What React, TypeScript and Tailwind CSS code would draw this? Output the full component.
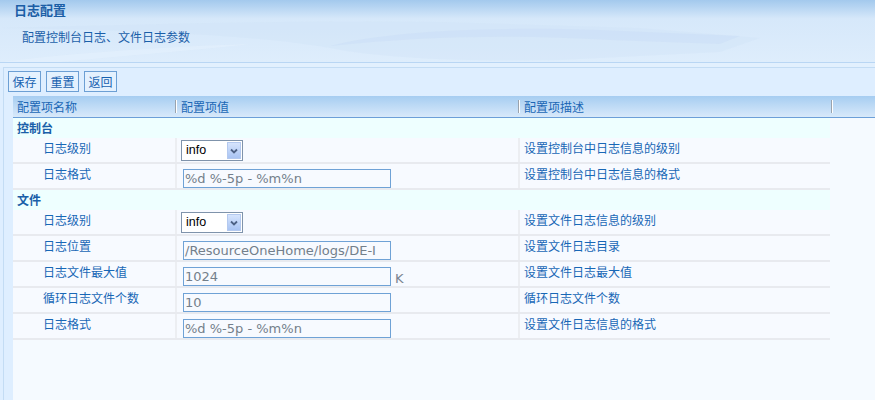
import React from "react";

type Row = {
  label: string;
  kind: "select" | "input";
  value?: string;
  suffix?: string;
  desc: string;
};

const groups: { title: string; rows: Row[] }[] = [
  {
    title: "控制台",
    rows: [
      { label: "日志级别", kind: "select", value: "info", desc: "设置控制台中日志信息的级别" },
      { label: "日志格式", kind: "input", value: "%d %-5p - %m%n", desc: "设置控制台中日志信息的格式" },
    ],
  },
  {
    title: "文件",
    rows: [
      { label: "日志级别", kind: "select", value: "info", desc: "设置文件日志信息的级别" },
      { label: "日志位置", kind: "input", value: "/ResourceOneHome/logs/DE-I", desc: "设置文件日志目录" },
      { label: "日志文件最大值", kind: "input", value: "1024", suffix: "K", desc: "设置文件日志最大值" },
      { label: "循环日志文件个数", kind: "input", value: "10", desc: "循环日志文件个数" },
      { label: "日志格式", kind: "input", value: "%d %-5p - %m%n", desc: "设置文件日志信息的格式" },
    ],
  },
];

const FakeSelect = ({ value }: { value: string }) => (
  <div className="flex h-[21px] w-[62px] items-center border border-[#7f93ab] bg-white">
    <span className="flex-1 pl-[4px] font-['Liberation_Sans',sans-serif] text-[12.5px] leading-[19px] text-black">
      {value}
    </span>
    <span className="m-[1px] flex h-[17px] w-[14px] items-center justify-center border border-[#b4c9ef] bg-gradient-to-b from-[#d6e4fd] to-[#a9c4f3]">
      <svg width="8" height="6" viewBox="0 0 8 6">
        <path d="M1 1.5 L4 4.5 L7 1.5" fill="none" stroke="#4d6185" strokeWidth="1.8" />
      </svg>
    </span>
  </div>
);

const TextBox = ({ value }: { value: string }) => (
  <div className="h-[19px] w-[208px] overflow-hidden whitespace-nowrap border border-[#6fa2d6] bg-[#f7faff] pl-[1px] font-['DejaVu_Sans',sans-serif] text-[13px] leading-[17px] text-[#737f8b]">
    {value}
  </div>
);

const ToolButton = ({ text }: { text: string }) => (
  <button className="h-[21px] w-[33px] border border-[#6c9fd4] bg-[#e4f1fe] text-[12px] leading-[19px] text-[#1862b0]">
    {text}
  </button>
);

export default function App() {
  return (
    <div className="flex h-[400px] w-[875px] flex-col overflow-hidden bg-[#deeeff] font-['Noto_Sans_CJK_SC',sans-serif] text-[12px]">
      {/* page title */}
      <div className="relative h-[62px] shrink-0 overflow-hidden bg-gradient-to-b from-[#a3c9ed] via-[#d6e8fa] via-30% to-[#deedfc]">
        <svg className="absolute left-0 top-0" width="875" height="62" viewBox="0 0 875 62">
          <path d="M0 28 C120 30 250 34 330 48 C380 58 460 62 560 60 L720 52 L760 38 L640 28 L440 22 C300 20 150 24 0 28 Z" fill="#cfe1f7" opacity="0.35" />
          <path d="M330 46 C420 36 520 34 610 40 L720 44 L740 36 L600 30 C480 26 380 32 330 46 Z" fill="#c3d8f5" opacity="0.3" />
          <path d="M0 62 C80 52 180 46 250 44 C200 50 120 56 60 62 Z" fill="#e6f2fe" opacity="0.5" />
        </svg>
        <div className="relative pl-[14px] pt-[2px] text-[13px] font-bold leading-[16px] text-[#1b5ea6]">日志配置</div>
        <div className="relative mt-[11px] pl-[22px] leading-[16px] text-[#1a5fa9]">配置控制台日志、文件日志参数</div>
      </div>
      <div className="h-[5px] shrink-0 border-t border-[#b9d6f4] bg-[#e2f0fe]" />

      {/* main panel */}
      <div className="ml-[3px] flex flex-1 flex-col border-l border-t border-[#c3dcf4] bg-[#deeeff]">
        <div className="flex h-[28px] shrink-0 gap-[5px] pl-[4px] pt-[3px]">
          <ToolButton text="保存" />
          <ToolButton text="重置" />
          <ToolButton text="返回" />
        </div>

        <div className="ml-[9px] flex flex-1 flex-col bg-[#f5faff]">
          {/* table header */}
          <div className="flex h-[22px] shrink-0 border-b border-[#6c9fd8] bg-gradient-to-b from-[#a6cdf1] to-[#d8e9fa] leading-[21px] text-[#1a67b5]">
            <div className="w-[162px] pl-[4px]">配置项名称</div>
            <div className="flex w-[343px] items-center">
              <span className="h-[13px] w-[2px] border-l border-r border-l-[#9aa3ad] border-r-white" />
              <span className="pl-[4px]">配置项值</span>
            </div>
            <div className="flex w-[313px] items-center">
              <span className="h-[13px] w-[2px] border-l border-r border-l-[#9aa3ad] border-r-white" />
              <span className="pl-[4px]">配置项描述</span>
            </div>
            <div className="flex items-center">
              <span className="h-[13px] w-[2px] border-l border-r border-l-[#9aa3ad] border-r-white" />
            </div>
          </div>

          {/* table body */}
          <div className="w-[817px]">
            {groups.map((g) => (
              <div key={g.title}>
                <div className="h-[20px] bg-[#eeffff] pl-[4px] font-bold leading-[20px] text-[#1a5fa9]">{g.title}</div>
                {g.rows.map((r, i) => (
                  <div key={i} className="flex h-[26px] border-b-2 border-[#e8eaef] bg-[#f7faff] text-[#1867b6]">
                    <div className="w-[162px] pl-[30px] pt-[2px] leading-[16px]">{r.label}</div>
                    <div className={`flex w-[343px] border-l-2 border-[#eceef2] ${r.kind === "select" ? "pl-[4px] pt-[2px]" : "pl-[6px] pt-[5px]"}`}>
                      {r.kind === "select" ? <FakeSelect value={r.value ?? ""} /> : <TextBox value={r.value ?? ""} />}
                      {r.suffix && (
                        <span className="ml-[4px] pt-[2px] font-['DejaVu_Sans',sans-serif] text-[13px] leading-[19px] text-[#7a8591]">{r.suffix}</span>
                      )}
                    </div>
                    <div className="flex-1 border-l-2 border-[#eceef2] pl-[4px] pt-[2px] leading-[16px]">{r.desc}</div>
                  </div>
                ))}
              </div>
            ))}
          </div>
        </div>
      </div>
    </div>
  );
}
